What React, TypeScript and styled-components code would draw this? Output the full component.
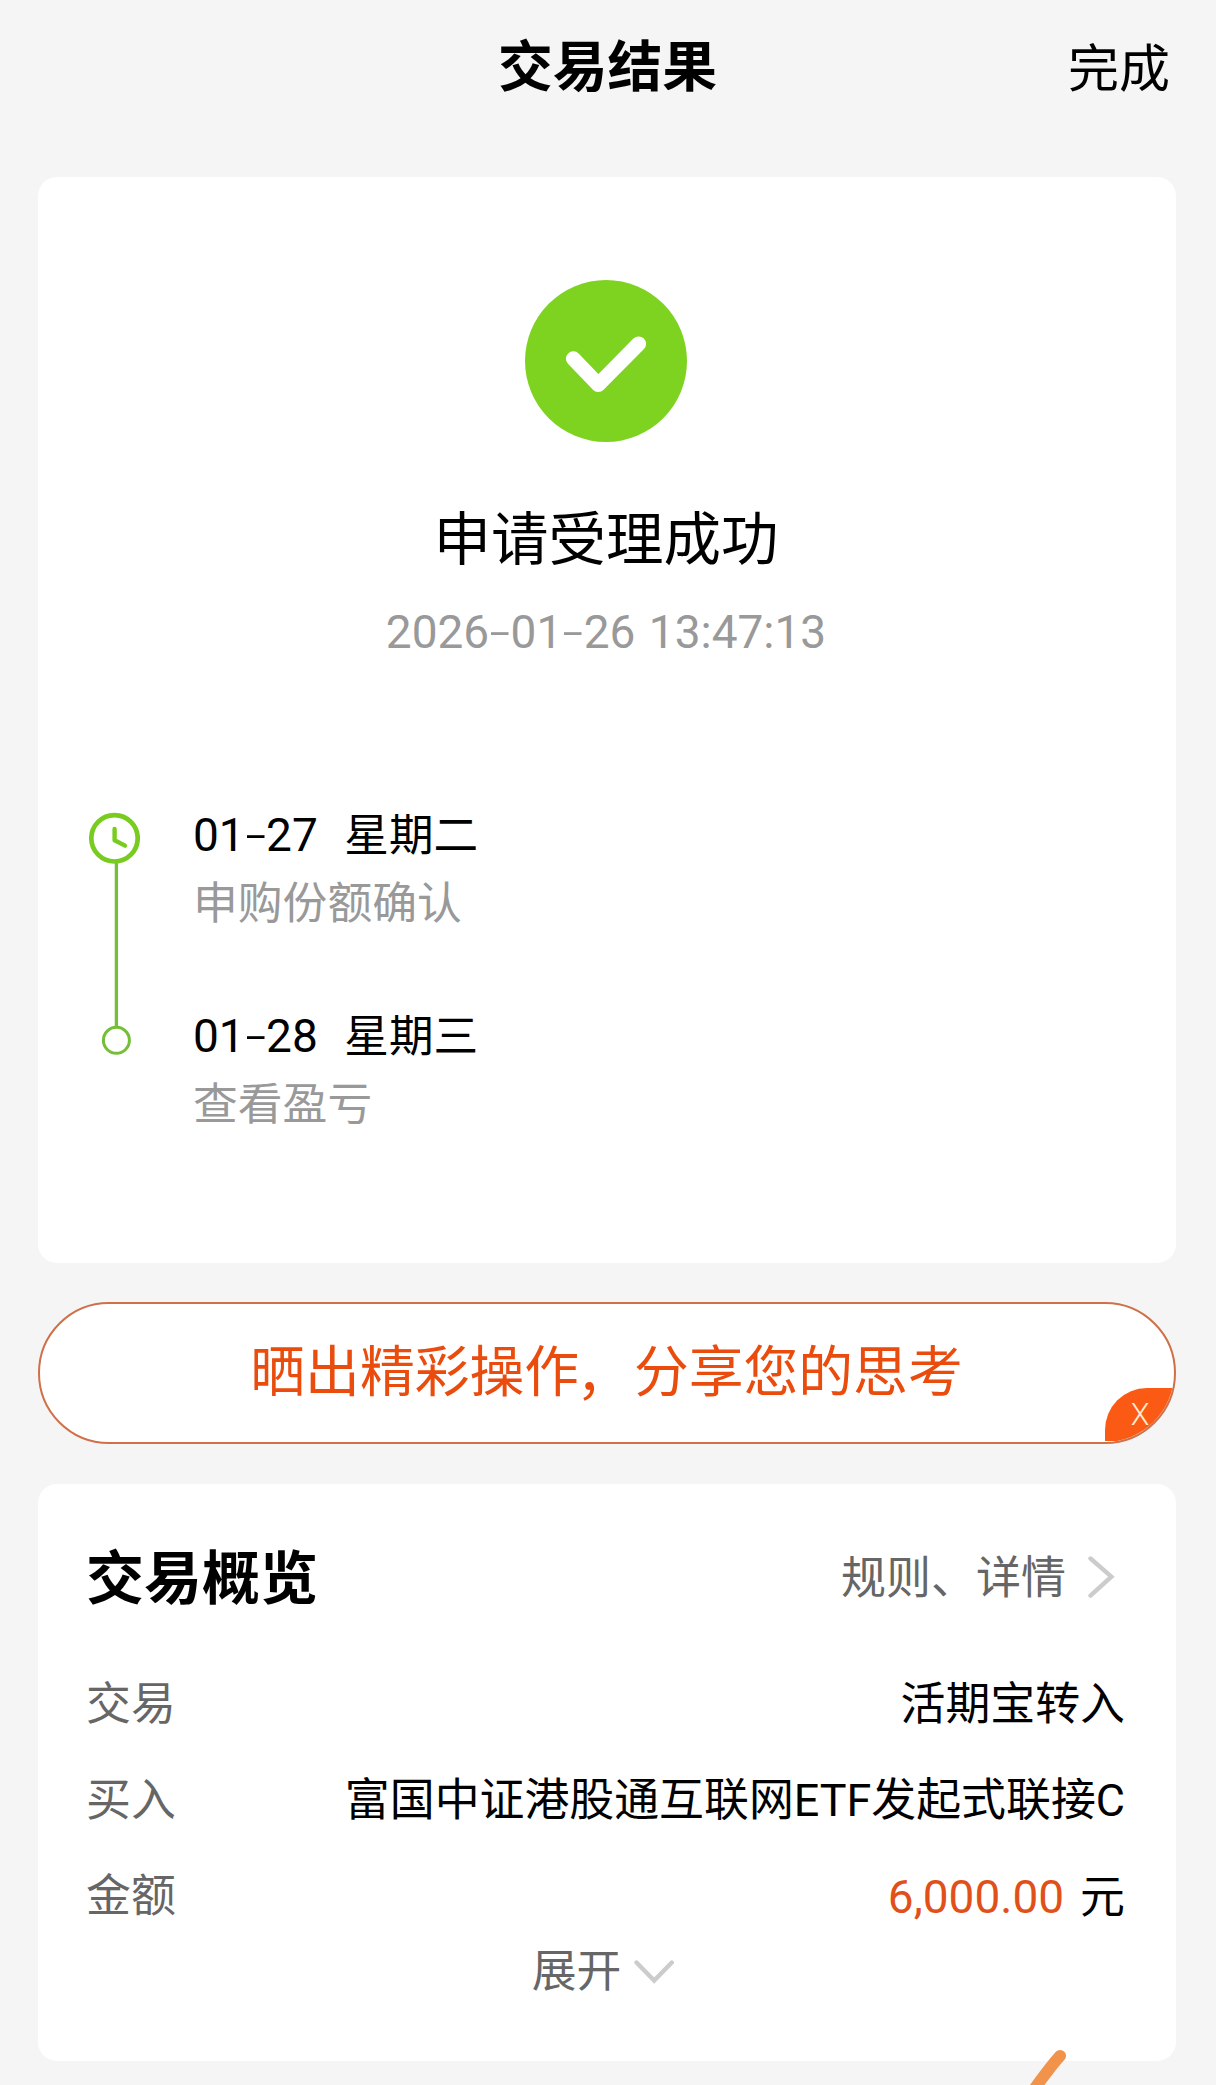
import React from "react";
import styled, { createGlobalStyle } from "styled-components";

const GlobalStyle = createGlobalStyle`
  * { box-sizing: border-box; }
  html, body { margin: 0; padding: 0; background: #f5f5f5; }
  body {
    font-family: Roboto, "Noto Sans CJK SC", sans-serif;
    color: #000;
    -webkit-font-smoothing: antialiased;
  }
`;

const Page = styled.div`
  position: relative;
  width: 1216px;
  height: 2085px;
  overflow: hidden;
  padding: 0 40px 0 38px;
  background: #f5f5f5;
`;

const Header = styled.header`
  display: grid;
  grid-template-columns: 1fr auto 1fr;
  align-items: center;
  height: 177px;
  padding-bottom: 43px;
`;

const HeaderTitle = styled.h1`
  grid-column: 2;
  margin: 0 0 0 1px;
  font-size: 54.8px;
  font-weight: 700;
  line-height: 80px;
`;

const DoneButton = styled.button`
  justify-self: end;
  margin: 6px -34px 0 0;
  padding: 0 40px 0 0;
  border: 0;
  background: none;
  color: #000;
  font: inherit;
  font-size: 51px;
  line-height: 80px;
`;

const Card = styled.section<{ $height: number; $pad: string }>`
  height: ${(p) => p.$height}px;
  padding: ${(p) => p.$pad};
  border-radius: 19px;
  background: #fff;
`;

const Status = styled.div`
  display: flex;
  flex-direction: column;
  align-items: center;
`;

const SuccessIcon = styled.svg`
  width: 162px;
  height: 162px;
`;

const StatusTitle = styled.h2`
  margin: 59px 0 0;
  font-size: 57.5px;
  font-weight: 400;
  line-height: 80px;
`;

const StatusTime = styled.time`
  margin-top: 21px;
  color: #999;
  font-size: 46px;
  line-height: 60px;
  word-spacing: 2px;
`;

const Dash = styled.span`
  display: inline-block;
  width: 21.4px;
  text-align: center;
  font-family: Inter, sans-serif;
  font-weight: 300;
  line-height: 1;
  transform: scaleX(1.25);
`;

const Timeline = styled.div`
  display: flex;
  gap: 53px;
  margin-top: 139px;
`;

const TimelineTrack = styled.svg`
  width: 52px;
  height: 254px;
`;

const TimelineList = styled.ol`
  display: flex;
  flex-direction: column;
  gap: 64px;
  margin: 0;
  padding: 0;
  list-style: none;
`;

const StepDate = styled.div`
  display: flex;
  gap: 26.5px;
  height: 69px;
  font-size: 46px;
  line-height: 68px;
`;

const Weekday = styled.span`
  padding-top: 1px;
  font-size: 44.6px;
`;

const StepText = styled.div`
  color: #999;
  font-size: 44.8px;
  line-height: 68px;
`;

const ShareBanner = styled.div`
  position: relative;
  display: flex;
  align-items: center;
  justify-content: center;
  height: 142px;
  margin: 39px 0 40px;
  padding: 0 1px 2px 0;
  overflow: hidden;
  border: 2px solid #cf7049;
  border-radius: 71px;
  background: #fff;
  color: #ea4c0e;
  font-size: 54.8px;
  line-height: 80px;
`;

const Comma = styled.span`
  display: inline-block;
  line-height: 1;
  transform: translate(-3px, 3px);
`;

const CloseTab = styled.button`
  position: absolute;
  right: -2px;
  bottom: 1px;
  width: 71px;
  height: 53px;
  padding: 0 1px 0 0;
  border: 0;
  border-radius: 42px 0 0 0;
  background: #fb5a14;
  color: #ffeccf;
  font: inherit;
  font-size: 30.5px;
  font-weight: 300;
  line-height: 53px;
  text-align: center;
`;

const OverviewHead = styled.div`
  display: flex;
  align-items: center;
  justify-content: space-between;
  margin-bottom: 38px;
`;

const OverviewTitle = styled.h2`
  margin: 0;
  font-size: 58px;
  font-weight: 700;
  line-height: 80px;
`;

const RulesLink = styled.a`
  display: flex;
  align-items: center;
  gap: 22px;
  padding-right: 9px;
  color: #666;
  font-size: 45px;
  line-height: 80px;
`;

const Row = styled.div`
  display: flex;
  align-items: center;
  justify-content: space-between;
  height: 96px;
  font-size: 44.9px;
  line-height: 68px;
`;

const Label = styled.span`
  color: #666;
`;

const Value = styled.span`
  color: #000;
  white-space: pre;
`;

const Amount = styled.span`
  margin-right: 16px;
  color: #e2501a;
  font-size: 46px;
`;

const Expand = styled.button`
  display: flex;
  align-items: center;
  gap: 13px;
  margin: 0 auto;
  padding: 0 5px 0 0;
  border: 0;
  background: none;
  color: #666;
  font: inherit;
  font-size: 44.8px;
  line-height: 54px;
`;

const FloatingStroke = styled.svg`
  position: absolute;
  left: 1016px;
  top: 2035px;
  width: 60px;
  height: 50px;
`;

const steps = [
  { date: "01-27", day: "星期二", text: "申购份额确认" },
  { date: "01-28", day: "星期三", text: "查看盈亏" },
];

function DateText({ value }: { value: string }) {
  return (
    <span>
      {value.split("-").map((part, i) => (
        <React.Fragment key={i}>
          {i > 0 && <Dash>-</Dash>}
          {part}
        </React.Fragment>
      ))}
    </span>
  );
}

export default function App() {
  return (
    <>
      <GlobalStyle />
      <Page>
        <Header>
          <HeaderTitle>交易结果</HeaderTitle>
          <DoneButton>完成</DoneButton>
        </Header>

        <Card $height={1086} $pad="103px 52px 0 50px">
          <Status>
            <SuccessIcon viewBox="0 0 162 162">
              <circle cx="81" cy="81" r="81" fill="#7ed321" />
              <path
                d="M48.3 78.7 73.3 104.6 113.7 63.8"
                fill="none"
                stroke="#fff"
                strokeWidth="14.8"
                strokeLinecap="round"
                strokeLinejoin="round"
              />
            </SuccessIcon>
            <StatusTitle>申请受理成功</StatusTitle>
            <StatusTime>
              <DateText value="2026-01-26 13:47:13" />
            </StatusTime>
          </Status>
          <Timeline>
            <TimelineTrack viewBox="0 0 52 254" fill="none">
              <path d="M28.4 62V225" stroke="#74be38" strokeWidth="3.3" />
              <circle cx="26.5" cy="37.3" r="23.2" stroke="#78cc20" strokeWidth="4.7" />
              <path
                d="M26.6 28V39.3L37 44.6"
                stroke="#78cc20"
                strokeWidth="4.4"
                strokeLinecap="round"
                strokeLinejoin="round"
              />
              <circle cx="28.4" cy="239.3" r="13" stroke="#74be38" strokeWidth="3" />
            </TimelineTrack>
            <TimelineList>
              {steps.map((s) => (
                <li key={s.date}>
                  <StepDate>
                    <DateText value={s.date} />
                    <Weekday>{s.day}</Weekday>
                  </StepDate>
                  <StepText>{s.text}</StepText>
                </li>
              ))}
            </TimelineList>
          </Timeline>
        </Card>

        <ShareBanner>
          <span>
            晒出精彩操作<Comma>，</Comma>分享您的思考
          </span>
          <CloseTab>X</CloseTab>
        </ShareBanner>

        <Card $height={577} $pad="55px 51px 0 48px">
          <OverviewHead>
            <OverviewTitle>交易概览</OverviewTitle>
            <RulesLink>
              规则、详情
              <svg width="28" height="46" viewBox="0 0 28 46" fill="none">
                <path
                  d="M2.5 2.5 23.4 20.7 2.5 39.6"
                  stroke="#ccc"
                  strokeWidth="4.4"
                  strokeLinecap="round"
                />
              </svg>
            </RulesLink>
          </OverviewHead>
          <Row>
            <Label>交易</Label>
            <Value>活期宝转入</Value>
          </Row>
          <Row>
            <Label>买入</Label>
            <Value>富国中证港股通互联网ETF发起式联接C</Value>
          </Row>
          <Row>
            <Label>金额</Label>
            <Value>
              <Amount>6,000.00</Amount>元
            </Value>
          </Row>
          <Expand>
            展开
            <svg width="40" height="26" viewBox="0 0 40 26" fill="none">
              <path
                d="M2.5 3.5 20.2 21.5 37.8 3.5"
                stroke="#ccc"
                strokeWidth="4.4"
                strokeLinecap="round"
              />
            </svg>
          </Expand>
        </Card>

        <FloatingStroke viewBox="0 0 60 50" fill="none">
          <path
            d="M44.2 20.8Q34 32 14 60"
            stroke="#f2934c"
            strokeWidth="11.7"
            strokeLinecap="round"
          />
        </FloatingStroke>
      </Page>
    </>
  );
}
